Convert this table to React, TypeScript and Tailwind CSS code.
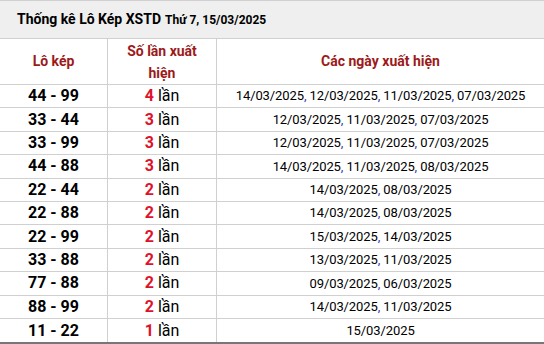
const ROWS: [string, number, string[]][] = [
  ['44 - 99', 4, ['14/03/2025', '12/03/2025', '11/03/2025', '07/03/2025']],
  ['33 - 44', 3, ['12/03/2025', '11/03/2025', '07/03/2025']],
  ['33 - 99', 3, ['12/03/2025', '11/03/2025', '07/03/2025']],
  ['44 - 88', 3, ['14/03/2025', '11/03/2025', '08/03/2025']],
  ['22 - 44', 2, ['14/03/2025', '08/03/2025']],
  ['22 - 88', 2, ['14/03/2025', '08/03/2025']],
  ['22 - 99', 2, ['15/03/2025', '14/03/2025']],
  ['33 - 88', 2, ['13/03/2025', '11/03/2025']],
  ['77 - 88', 2, ['09/03/2025', '06/03/2025']],
  ['88 - 99', 2, ['14/03/2025', '11/03/2025']],
  ['11 - 22', 1, ['15/03/2025']],
];

export default function App() {
  return (
    <div className="w-[544px] h-[344px] overflow-hidden bg-white font-['Roboto',sans-serif] text-black">
      <div className="h-[39px] border-t border-[#d0d0d0] border-b bg-[#efefef] flex items-center pl-[17px] font-bold">
        <span className="text-[14px]">Thống kê Lô Kép XSTD</span>
        <span className="text-[12px] ml-[4px]">Thứ 7, 15/03/2025</span>
      </div>
      <div className="grid grid-cols-[108px_109px_1fr] border-b-2 border-[#777]">
        <div className="h-[46px] border-b border-r border-[#d0d0d0] flex items-center justify-center text-[14px] font-bold text-[#9c1a1a]">
          Lô kép
        </div>
        <div className="h-[46px] border-b border-r border-[#d0d0d0] flex items-center justify-center text-center text-[14px] font-bold text-[#9c1a1a] leading-[22px]">
          Số lần xuất
          <br />
          hiện
        </div>
        <div className="h-[46px] border-b border-[#d0d0d0] flex items-center justify-center text-[14px] font-bold text-[#9c1a1a]">
          Các ngày xuất hiện
        </div>
        {ROWS.map(([pair, count, dates], i) => {
          const last = i === ROWS.length - 1;
          const b = last ? '' : 'border-b';
          return [
            <div key={`a${i}`} className={`h-[23.4px] ${b} border-r border-[#d0d0d0] flex items-center justify-center text-[16px] font-bold`}>
              {pair}
            </div>,
            <div key={`b${i}`} className={`h-[23.4px] ${b} border-r border-[#d0d0d0] flex items-center justify-center text-[16px]`}>
              <span className="font-bold text-[#e0112b] mr-[4px]">{count}</span>lần
            </div>,
            <div key={`c${i}`} className={`h-[23.4px] ${b} border-[#d0d0d0] flex items-center justify-center text-[13px] tracking-[-0.1px]`}>
              {dates.map((d, j) => (
                <span key={j}>
                  {j > 0 && <span className="text-[#3b3bb0]">, </span>}
                  {d}
                </span>
              ))}
            </div>,
          ];
        })}
      </div>
    </div>
  );
}
